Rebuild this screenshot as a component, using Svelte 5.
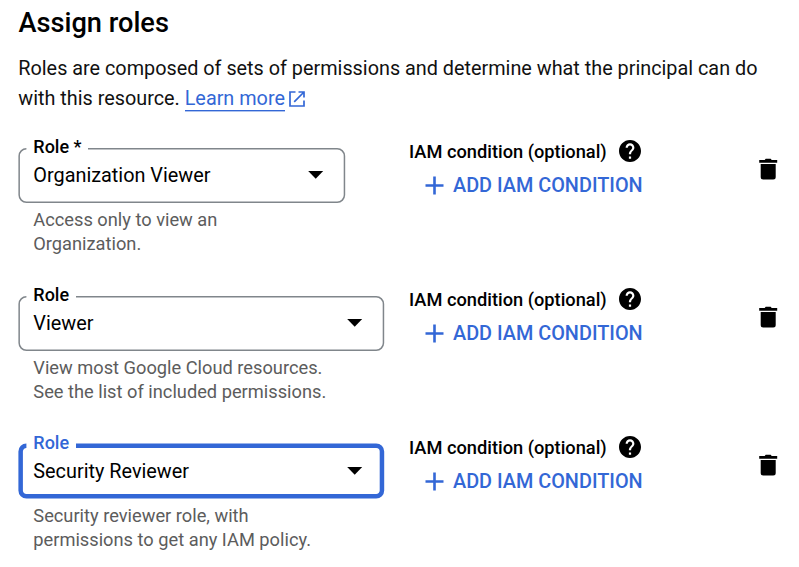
<script>
  const roles = [
    { label: 'Role *', value: 'Organization Viewer', help: ['Access only to view an', 'Organization.'], width: 327, notch: 70 },
    { label: 'Role', value: 'Viewer', help: ['View most Google Cloud resources.', 'See the list of included permissions.'], width: 366, notch: 58 },
    { label: 'Role', value: 'Security Reviewer', help: ['Security reviewer role, with', 'permissions to get any IAM policy.'], width: 366, notch: 58, focused: true }
  ];

  // Rounded outline that leaves a gap in the top edge for the label.
  function outline({ width, notch, focused }) {
    const stroke = focused ? 4.5 : 1.5;
    const left = 0.4 + stroke / 2;
    const top = (focused ? -0.5 : 0) + stroke / 2;
    const r = 8 - stroke / 2;
    const right = width + 0.2 - stroke / 2;
    const bottom = (focused ? 54.5 : 55) - stroke / 2;
    return `M${notch} ${top}H${right - r}a${r} ${r} 0 0 1 ${r} ${r}V${bottom - r}a${r} ${r} 0 0 1 ${-r} ${r}H${left + r}a${r} ${r} 0 0 1 ${-r} ${-r}V${top + r}a${r} ${r} 0 0 1 ${r} ${-r}`;
  }
</script>

<main>
  <h1>Assign roles</h1>
  <p class="intro">
    <span class="line">Roles are composed of sets of permissions and determine what the principal can do</span>
    <span class="line">with this resource. <a href="#learn">Learn more</a><svg class="ext" viewBox="0 0 16 16" width="16" height="16" aria-hidden="true"><path d="M6.500 1H1v14h14V9.500M9.500 1H15v5.500M15 1L5.200 10.800" fill="none" stroke="currentColor" stroke-width="1.700" /></svg></span>
  </p>

  {#each roles as role}
    <section class="row">
      <div class="role">
        <div class="field" class:focused={role.focused} style:width="{role.width}px">
          <svg class="outline" width={role.width + 1} height="56" aria-hidden="true"><path d={outline(role)} /></svg>
          <div class="label">{role.label}</div>
          <div class="select">
            <span class="value">{role.value}</span>
            <svg width="16" height="8" viewBox="0 0 16 8" aria-hidden="true"><path d="M.2 0h15L7.700 7.800z" /></svg>
          </div>
        </div>
        <div class="help">
          {#each role.help as line}<div>{line}</div>{/each}
        </div>
      </div>
      <div class="condition">
        <div class="heading">
          <span>IAM condition (optional)</span>
          <svg width="22" height="22" viewBox="2 2 20 20" aria-label="Help"><path d="M12 2C6.480 2 2 6.480 2 12s4.480 10 10 10 10-4.480 10-10S17.520 2 12 2zm1 17h-2v-2h2v2zm2.070-7.750-.9.920C13.450 12.900 13 13.500 13 15h-2v-.5c0-1.100.45-2.100 1.170-2.830l1.240-1.260c.37-.36.59-.86.59-1.410 0-1.100-.9-2-2-2s-2 .9-2 2H8c0-2.210 1.790-4 4-4s4 1.790 4 4c0 .88-.36 1.680-.93 2.250z" /></svg>
        </div>
        <button class="add">
          <svg width="19" height="19" viewBox="0 0 19 19" aria-hidden="true"><path d="M9.500 .5v18M.5 9.500h18" stroke="currentColor" stroke-width="2.600" /></svg>
          <span>ADD IAM CONDITION</span>
        </button>
      </div>
      <button class="delete" aria-label="Delete role">
        <svg width="20" height="22" viewBox="0 0 20 22" aria-hidden="true"><path d="M1.200 2h5.500l1-1.300h5l1 1.300h5.500v2.700h-18zM2.700 6h15v13q0 2.500-2.500 2.500h-10q-2.500 0-2.500-2.500z" /></svg>
      </button>
    </section>
  {/each}
</main>

<style>
  :global(body) { background: #fff; }
  main {
    box-sizing: border-box;
    width: 799px;
    height: 567px;
    overflow: hidden;
    padding: 6px 20px 0 18px;
    font-family: Roboto, "Liberation Sans", sans-serif;
    color: #000;
  }
  h1 { margin: 0; padding-left: .5px; font-size: 27.200px; line-height: 34px; font-weight: 500; white-space: nowrap; }
  .intro { margin: 14px 0 0; height: 94px; padding-left: .3px; font-size: 19.820px; line-height: 30px; color: #111; }
  .line { display: block; white-space: nowrap; height: 30px; }
  a { display: inline-block; height: 26px; line-height: 30px; text-decoration: none; color: #3367d6; border-bottom: 1px solid #3367d6; box-shadow: 0 .4px #3367d6; }
  .ext { margin-left: 4px; color: #3367d6; vertical-align: -2px; }
  .row { display: flex; height: 148px; align-items: flex-start; }
  .role { width: 391px; }
  .field { position: relative; box-sizing: border-box; height: 55px; padding: 0 21px 0 15.300px; }
  .outline { position: absolute; left: 0; top: 0; overflow: visible; }
  .outline path { fill: none; stroke: #80868b; stroke-width: 1.500px; }
  .focused .outline path { stroke: #3367d6; stroke-width: 4.500px; }
  .label { position: relative; height: 9px; font-size: 18px; line-height: 18px; font-weight: 500; margin-top: -10px; padding-bottom: 10px; }
  .field { display: flow-root; }
  .focused .label { color: #3367d6; }
  .select { display: flex; justify-content: space-between; align-items: center; height: 36px; }
  .value { font-size: 19.850px; line-height: 34px; white-space: nowrap; padding-top: 1px; }
  .help { padding: 5px 0 0 15.300px; font-size: 18.250px; line-height: 24.300px; color: #5c5c5c; white-space: nowrap; }
  .condition { width: 349px; margin-top: -11px; }
  .heading { display: flex; align-items: center; gap: 12px; height: 28px; font-size: 18.250px; font-weight: 500; white-space: nowrap; }
  button { border: 0; background: none; padding: 0; margin: 0; font: inherit; display: flex; }
  .add { align-items: center; gap: 9px; height: 30px; margin: 5px 0 0 16px; color: #3367d6; font-size: 19.850px; font-weight: 500; white-space: nowrap; }
  .delete { margin-top: 10px; }
</style>
